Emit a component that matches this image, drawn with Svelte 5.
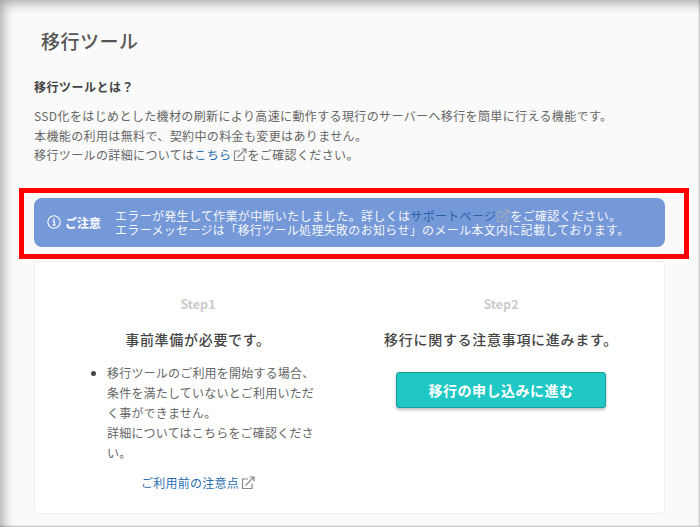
<script>
	const steps = ['Step1', 'Step2'];
</script>

{#snippet extIcon(cls)}
	<svg class="ext {cls}" viewBox="0 0 14 14" width="14" height="14" fill="none" stroke="currentColor" stroke-width="1.2">
		<path d="M11 7.5V12.5H1.5V3H7" />
		<path d="M4.5 9.5L12.5 1.5M8.5 1H13V5.5" />
	</svg>
{/snippet}

<div class="page">
	<main>
		<h1>移行ツール</h1>

		<section class="intro">
			<h2>移行ツールとは？</h2>
			<p>
				SSD化をはじめとした機材の刷新により高速に動作する現行のサーバーへ移行を簡単に行える機能です。<br />
				本機能の利用は無料で、契約中の料金も変更はありません。<br />
				移行ツールの詳細については<a href="#top">こちら</a>{@render extIcon('')}をご確認ください。
			</p>
		</section>

		<div class="alert-wrap">
			<div class="alert">
				<div class="alert-label">
					<svg viewBox="0 0 14 14" width="14" height="14" fill="none" stroke="currentColor">
						<circle cx="7" cy="7" r="6.2" stroke-width="1.1" />
						<path d="M5.8 6.2H7.3V10M5.6 10.2H8.6" stroke-width="1.2" />
						<path d="M6.3 3.6H7.7V5H6.3Z" fill="currentColor" stroke="none" />
					</svg>
					<span>ご注意</span>
				</div>
				<div class="alert-text">
					エラーが発生して作業が中断いたしました。詳しくは<a href="#top">サポートページ</a>{@render extIcon('alert-ext')}をご確認ください。<br />
					エラーメッセージは「移行ツール処理失敗のお知らせ」のメール本文内に記載しております。
				</div>
			</div>
			<div class="highlight"></div>
		</div>

		<div class="card">
			<div class="col">
				<div class="step">{steps[0]}</div>
				<h3>事前準備が必要です。</h3>
				<ul>
					<li>移行ツールのご利用を開始する場合、条件を満たしていないとご利用いただく事ができません。<br />詳細についてはこちらをご確認ください。</li>
				</ul>
				<a class="note-link" href="#top">ご利用前の注意点{@render extIcon('')}</a>
			</div>
			<div class="col">
				<div class="step">{steps[1]}</div>
				<h3>移行に関する注意事項に進みます。</h3>
				<button type="button">移行の申し込みに進む</button>
			</div>
		</div>
	</main>
</div>

<style>
	:global(body) {
		background: #fafafa;
	}

	.page {
		position: relative;
		width: 700px;
		height: 527px;
		overflow: hidden;
		box-sizing: border-box;
		background: #fafafa;
		font-family: "Noto Sans CJK JP", "Noto Sans", sans-serif;
		color: #666;
		box-shadow: inset 9px 9px 12px -6px rgba(0, 0, 0, 0.35), inset -2px -2px 2px -1px rgba(0, 0, 0, 0.25);
	}

	main {
		padding: 28px 35px 0 34px;
	}

	h1 {
		margin: 0 0 0 7px;
		font-size: 19px;
		line-height: 26px;
		font-weight: 500;
		color: #555;
		letter-spacing: 0.5px;
	}

	h2 {
		margin: 24px 0 10px;
		font-size: 12px;
		line-height: 18px;
		font-weight: 700;
		color: #444;
		letter-spacing: 0.5px;
	}

	p {
		margin: 0;
		font-size: 12px;
		line-height: 19.5px;
		letter-spacing: 0.375px;
	}

	a {
		color: #2a6db0;
		text-decoration: none;
	}

	.ext {
		color: #888;
		vertical-align: -2px;
		margin: 0 0 0 2px;
	}

	.alert-wrap {
		position: relative;
		margin-top: 33px;
	}

	.alert {
		display: flex;
		align-items: center;
		height: 49px;
		box-sizing: border-box;
		background: #7598d8;
		border-radius: 8px;
		color: #fff;
		padding: 0 12px 0 13px;
		font-size: 12px;
	}

	.alert-label {
		display: flex;
		align-items: center;
		gap: 4px;
		width: 68px;
		flex: none;
		font-weight: 700;
	}

	.alert-text {
		padding-top: 2px;
		line-height: 13.5px;
		letter-spacing: 0.32px;
		color: #f4f6fb;
	}

	.alert-text a {
		color: #2a62a8;
	}

	.alert-ext {
		color: #a3a9b5;
		margin: 0;
	}

	.highlight {
		position: absolute;
		left: -15px;
		right: -24px;
		top: -10px;
		bottom: -12px;
		border: 5px solid #f00;
		pointer-events: none;
	}

	.card {
		display: grid;
		grid-template-columns: 256px 256px;
		column-gap: 47px;
		height: 253px;
		box-sizing: border-box;
		margin-top: 14px;
		padding-left: 35px;
		background: #fff;
		border: 1px solid #eee;
		border-radius: 4px;
	}

	.col {
		display: flex;
		flex-direction: column;
		align-items: center;
		padding-top: 33px;
	}

	.step {
		font-size: 12.5px;
		line-height: 18px;
		font-weight: 700;
		color: #ccc;
	}

	h3 {
		margin: 16px 0 0;
		font-size: 14px;
		line-height: 20px;
		font-weight: 500;
		color: #444;
		letter-spacing: 0.7px;
	}

	ul {
		margin: 14px 0 0;
		padding: 0 0 0 37px;
		width: 212px;
		box-sizing: content-box;
		font-size: 12px;
		line-height: 20px;
		letter-spacing: 0.2px;
		align-self: flex-start;
	}

	li::marker {
		color: #444;
	}

	.note-link {
		margin-top: 10px;
		font-size: 12px;
		line-height: 20px;
		letter-spacing: 0.25px;
	}

	button {
		margin-top: 23px;
		width: 210px;
		height: 36px;
		border: 1px solid #189c98;
		border-radius: 3px;
		background: #1fc8c4;
		color: #fff;
		font-family: inherit;
		font-size: 14px;
		font-weight: 700;
		letter-spacing: 0.5px;
		box-shadow: 0 2px 3px rgba(0, 0, 0, 0.25);
	}
</style>
